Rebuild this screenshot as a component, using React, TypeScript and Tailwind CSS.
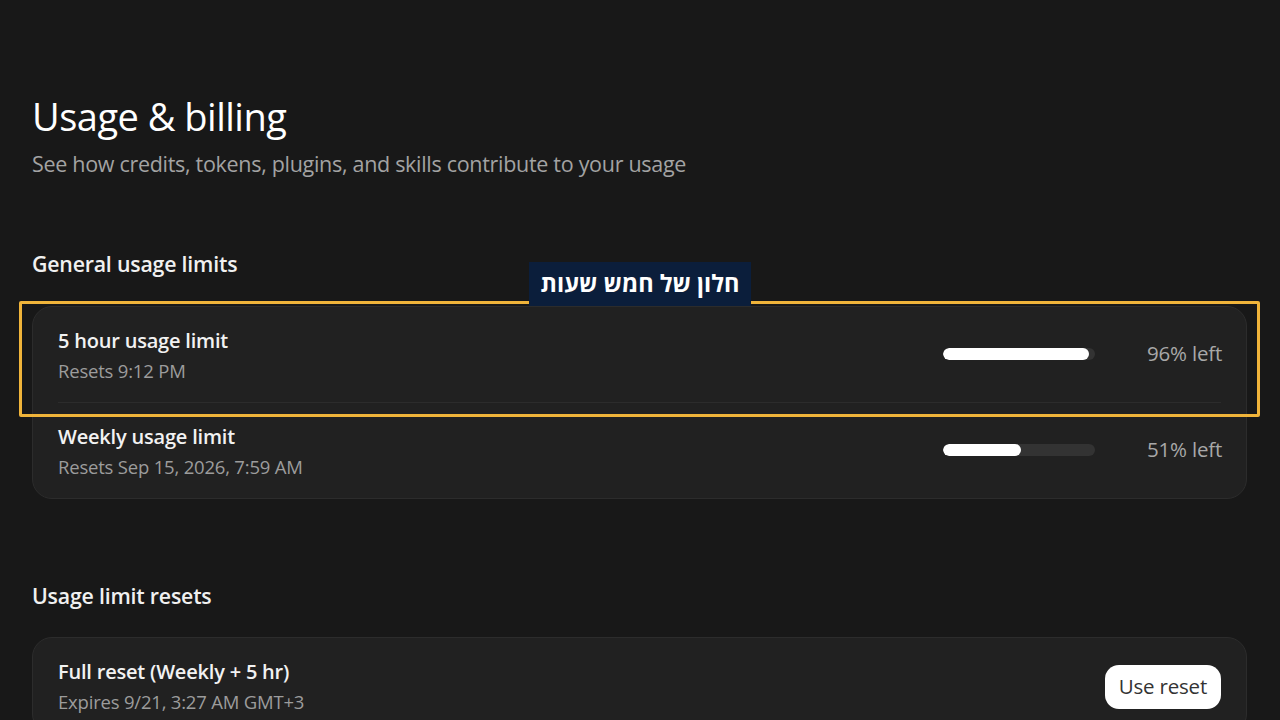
import React from "react";

interface LimitRow {
  title: string;
  resets: string;
  left: number;
}

const limits: LimitRow[] = [
  { title: "5 hour usage limit", resets: "Resets 9:12 PM", left: 96 },
  { title: "Weekly usage limit", resets: "Resets Sep 15, 2026, 7:59 AM", left: 51 },
];

const font = { fontFamily: '"Open Sans", "Noto Sans", sans-serif' };

const Row: React.FC<{ row: LimitRow; divider?: boolean }> = ({ row, divider }) => (
  <div className={`flex items-center justify-between pt-[20px] pb-[18px] ${divider ? "border-b border-[#2c2c2c]" : ""}`}>
    <div className="flex flex-col gap-[3px]">
      <p className="text-[20px] leading-[28px] font-semibold text-[#f2f2f2] tracking-[-0.2px]">{row.title}</p>
      <p className="text-[18.5px] leading-[26px] text-[#9c9c9c] tracking-[-0.2px]">{row.resets}</p>
    </div>
    <div className="flex items-center gap-[52px] pb-[4px]">
      <div className="h-[12px] w-[152px] rounded-full bg-[#333333] overflow-hidden">
        <div className="h-full rounded-full bg-white" style={{ width: `${row.left}%` }} />
      </div>
      <span className="w-[74px] whitespace-nowrap text-right text-[20.5px] text-[#a8a8a8] tracking-[-0.2px]">{row.left}% left</span>
    </div>
  </div>
);

export default function App() {
  return (
    <div className="relative h-[720px] overflow-hidden bg-[#181818] text-white" style={font}>
      <div className="pl-[32px] pr-[32px] pt-[92px]">
        <h1 className="text-[38px] leading-[48px] text-white tracking-[-0.5px]">Usage &amp; billing</h1>
        <p className="mt-[9px] text-[21.5px] leading-[30px] text-[#a3a3a3] tracking-[-0.3px]">
          See how credits, tokens, plugins, and skills contribute to your usage
        </p>

        <h2 className="mt-[70px] text-[21.3px] leading-[30px] font-semibold text-[#f0f0f0] tracking-[-0.2px]">
          General usage limits
        </h2>
        <div className="mt-[27px] mr-[1px] rounded-[20px] border border-[#2c2c2c] bg-[#212121] px-[25px]">
          <Row row={limits[0]} divider />
          <Row row={limits[1]} />
        </div>

        <h2 className="mt-[82px] text-[21.3px] leading-[30px] font-semibold text-[#f0f0f0] tracking-[-0.2px]">
          Usage limit resets
        </h2>
        <div className="mt-[26px] mr-[1px] rounded-[20px] border border-[#2c2c2c] bg-[#212121] px-[25px]">
          <div className="flex items-center justify-between pt-[20px] pb-[18px]">
            <div className="flex flex-col gap-[3px]">
              <p className="text-[20px] leading-[28px] font-semibold text-[#f2f2f2] tracking-[-0.2px]">
                Full reset (Weekly + 5 hr)
              </p>
              <p className="text-[18.5px] leading-[26px] text-[#9c9c9c] tracking-[-0.2px]">
                Expires 9/21, 3:27 AM GMT+3
              </p>
            </div>
            <button className="h-[44px] rounded-[14px] bg-white px-[14px] text-[20.5px] text-[#333333] tracking-[-0.2px]">
              Use reset
            </button>
          </div>
        </div>
      </div>

      {/* highlight annotation */}
      <div className="absolute left-[19px] top-[301px] h-[116px] w-[1241px] rounded-[2px] border-[3px] border-[#f0b43a]" />
      <div
        dir="rtl"
        className="absolute left-[529px] top-[262px] flex h-[44px] w-[222px] items-center justify-center bg-[#0b1e3b] text-[23.5px] font-bold text-white"
        style={{ fontFamily: '"Open Sans", "DejaVu Sans", sans-serif' }}
      >
        חלון של חמש שעות
      </div>
    </div>
  );
}
